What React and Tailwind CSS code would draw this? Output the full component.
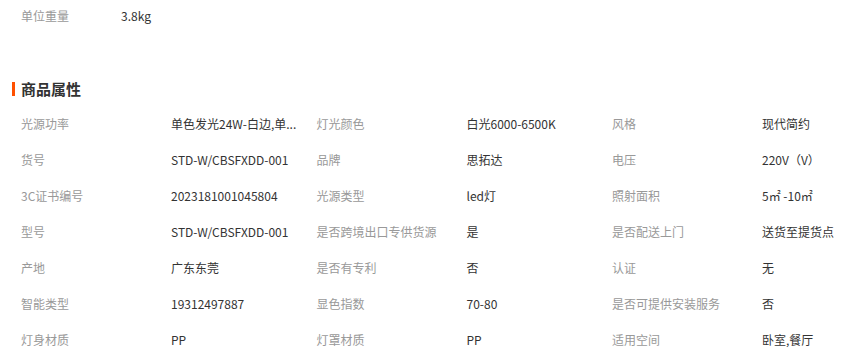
import React from "react";

const rows = [
  [["光源功率", "单色发光24W-白边,单..."], ["灯光颜色", "白光6000-6500K"], ["风格", "现代简约"]],
  [["货号", "STD-W/CBSFXDD-001"], ["品牌", "思拓达"], ["电压", "220V（V）"]],
  [["3C证书编号", "2023181001045804"], ["光源类型", "led灯"], ["照射面积", "5㎡ -10㎡"]],
  [["型号", "STD-W/CBSFXDD-001"], ["是否跨境出口专供货源", "是"], ["是否配送上门", "送货至提货点"]],
  [["产地", "广东东莞"], ["是否有专利", "否"], ["认证", "无"]],
  [["智能类型", "19312497887"], ["显色指数", "70-80"], ["是否可提供安装服务", "否"]],
  [["灯身材质", "PP"], ["灯罩材质", "PP"], ["适用空间", "卧室,餐厅"]],
];

export default function App() {
  return (
    <div
      className="w-[859px] h-[348px] overflow-hidden bg-white text-[12px]"
      style={{ fontFamily: '"Noto Sans CJK SC", "Liberation Sans", sans-serif' }}
    >
      <div className="h-[32px] flex items-center pl-[21px]">
        <div className="w-[100px] text-[#999]">单位重量</div>
        <div className="text-[#333]">3.8kg</div>
      </div>
      <div className="mt-[40px] h-[34px] flex items-center pl-[12px]">
        <div className="w-[3px] h-[14px] bg-[#ff5000]" />
        <div className="ml-[6px] text-[15px] font-bold text-[#333]">商品属性</div>
      </div>
      <div className="pl-[21px]">
        {rows.map((row, i) => (
          <div key={i} className="flex h-[36px] items-center">
            {row.map(([k, v], j) => (
              <div key={j} className="flex items-center">
                <div className="w-[150px] text-[#999] whitespace-nowrap">{k}</div>
                <div className="w-[145.5px] text-[#333] whitespace-nowrap">{v}</div>
              </div>
            ))}
          </div>
        ))}
      </div>
    </div>
  );
}
